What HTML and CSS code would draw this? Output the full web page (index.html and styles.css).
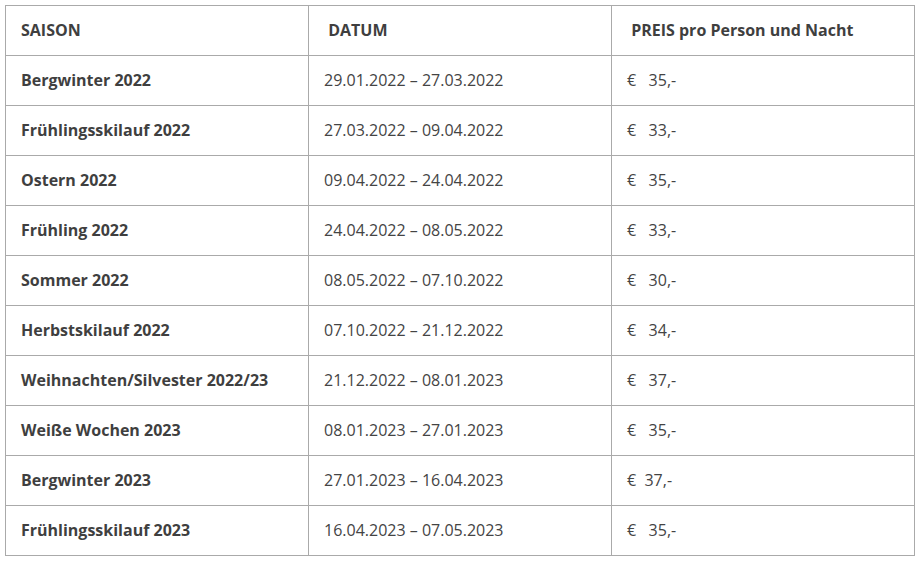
FILE: index.html
```html
<!DOCTYPE html>
<html lang="de">
<head>
<meta charset="utf-8">
<title>Preise</title>
<link rel="stylesheet" href="styles.css">
</head>
<body>
<table class="prices">
  <colgroup><col class="c1"><col class="c2"><col class="c3"></colgroup>
  <thead>
    <tr><th>SAISON</th><th>&nbsp;DATUM</th><th>&nbsp;PREIS pro Person und Nacht</th></tr>
  </thead>
  <tbody>
    <tr><td class="season">Bergwinter 2022</td><td>29.01.2022 – 27.03.2022</td><td>€&nbsp;&nbsp; 35,-</td></tr>
    <tr><td class="season">Frühlingsskilauf 2022</td><td>27.03.2022 – 09.04.2022</td><td>€&nbsp;&nbsp; 33,-</td></tr>
    <tr><td class="season">Ostern 2022</td><td>09.04.2022 – 24.04.2022</td><td>€&nbsp;&nbsp; 35,-</td></tr>
    <tr><td class="season">Frühling 2022</td><td>24.04.2022 – 08.05.2022</td><td>€&nbsp;&nbsp; 33,-</td></tr>
    <tr><td class="season">Sommer 2022</td><td>08.05.2022 – 07.10.2022</td><td>€&nbsp;&nbsp; 30,-</td></tr>
    <tr><td class="season">Herbstskilauf 2022</td><td>07.10.2022 – 21.12.2022</td><td>€&nbsp;&nbsp; 34,-</td></tr>
    <tr><td class="season">Weihnachten/Silvester 2022/23</td><td>21.12.2022 – 08.01.2023</td><td>€&nbsp;&nbsp; 37,-</td></tr>
    <tr><td class="season">Weiße Wochen 2023</td><td>08.01.2023 – 27.01.2023</td><td>€&nbsp;&nbsp; 35,-</td></tr>
    <tr><td class="season">Bergwinter 2023</td><td>27.01.2023 – 16.04.2023</td><td>€&nbsp; 37,-</td></tr>
    <tr><td class="season">Frühlingsskilauf 2023</td><td>16.04.2023 – 07.05.2023</td><td>€&nbsp;&nbsp; 35,-</td></tr>
  </tbody>
</table>
</body>
</html>
```

FILE: styles.css
```css
html, body {
  margin: 0;
  padding: 0;
  background: #ffffff;
}
body {
  padding: 5px;
  font-family: "Open Sans", "Liberation Sans", sans-serif;
  font-size: 16px;
  color: #444444;
}
.prices {
  border-collapse: collapse;
  width: 909px;
  table-layout: fixed;
}
.prices .c1 { width: 303px; }
.prices .c2 { width: 303px; }
.prices .c3 { width: 303px; }
.prices th,
.prices td {
  border: 1px solid #aaaaaa;
  height: 50px;
  box-sizing: border-box;
  padding: 0 15px 2px;
  text-align: left;
  vertical-align: middle;
  line-height: 24px;
  white-space: nowrap;
}
.prices th {
  font-weight: 700;
  color: #3f3f3f;
}
.prices td.season {
  font-weight: 700;
  color: #3f3f3f;
}
```
